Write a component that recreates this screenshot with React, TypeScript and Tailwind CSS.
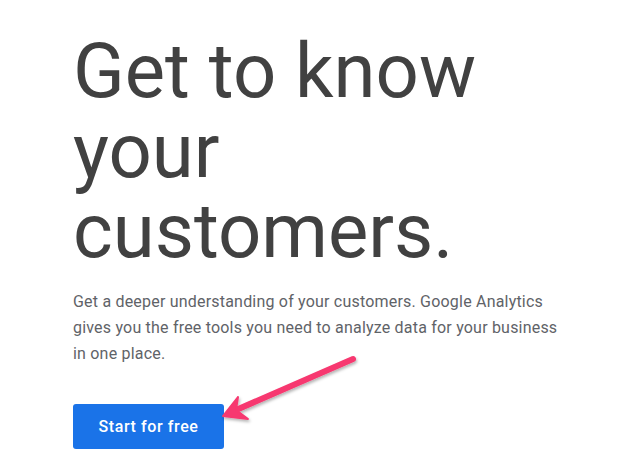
import React from "react"

const Arrow = () => (
  <svg
    className="absolute left-0 top-0 pointer-events-none"
    width="619"
    height="474"
    viewBox="0 0 619 474"
  >
    <defs>
      <filter id="shadow" x="-20%" y="-20%" width="140%" height="140%">
        <feDropShadow dx="1" dy="2" stdDeviation="1.5" floodColor="#000" floodOpacity="0.3" />
      </filter>
    </defs>
    <g filter="url(#shadow)">
      <line
        x1="353"
        y1="359"
        x2="236"
        y2="410"
        stroke="#f7386f"
        strokeWidth="6"
        strokeLinecap="round"
      />
      <path d="M223 416 L238 397 L236 410 L248 419 Z" fill="#f7386f" stroke="#f7386f" strokeWidth="2" strokeLinejoin="round" />
    </g>
  </svg>
)

const App = () => {
  return (
    <main className="relative w-[619px] h-[474px] bg-white overflow-hidden">
      <div className="pt-[31px] pl-[73px]">
        <h1 className="font-['Roboto',sans-serif] font-normal text-[76px] leading-[80px] text-[#414141] tracking-[0px]">
          Get to know
          <br />
          your
          <br />
          customers.
        </h1>
        <p className="mt-[18px] font-['Roboto',sans-serif] text-[16px] leading-[26px] text-[#5f6368] tracking-[0.2px]">
          Get a deeper understanding of your customers. Google Analytics
          <br />
          gives you the free tools you need to analyze data for your business
          <br />
          in one place.
        </p>
        <button className="mt-[37px] w-[151px] h-[45px] rounded-[3px] bg-[#1a73e8] text-white font-['Roboto',sans-serif] font-medium text-[16px] tracking-[0.6px]">
          Start for free
        </button>
      </div>
      <Arrow />
    </main>
  )
}

export default App
